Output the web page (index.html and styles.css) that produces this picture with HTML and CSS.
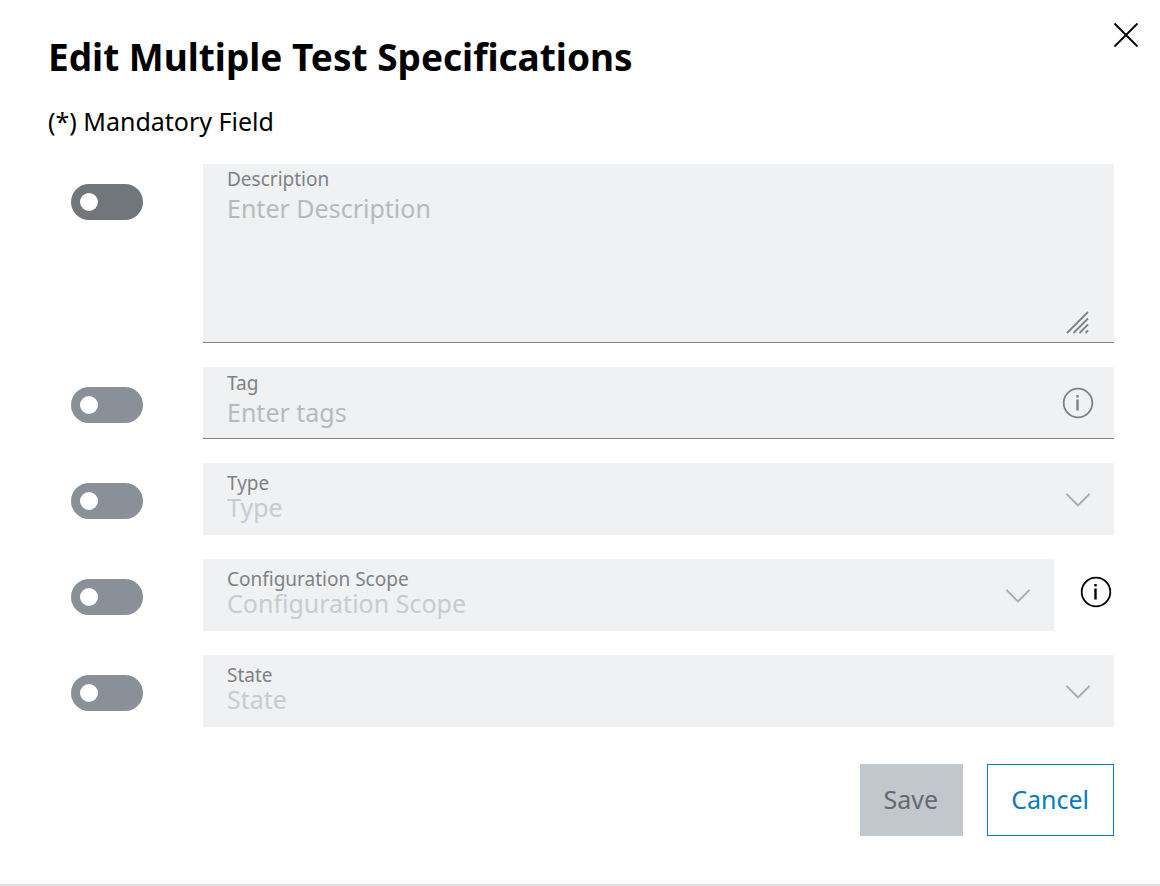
FILE: index.html
```html
<!DOCTYPE html>
<html lang="en">
<head>
    <meta charset="UTF-8">
    <meta name="viewport" content="width=device-width, initial-scale=1.0">
    <title>Edit Multiple Test Specifications</title>
    <link rel="stylesheet" href="styles.css">
</head>
<body>
    <form class="dialog" role="dialog" aria-labelledby="dialog-title">
        <button type="button" class="close-btn" aria-label="Close">
            <svg width="26" height="26" viewBox="0 0 26 26"><path d="M1.5 1.5 24.5 24.5M24.5 1.5 1.5 24.5"/></svg>
        </button>
        <h1 id="dialog-title">Edit Multiple Test Specifications</h1>
        <p class="hint">(*) Mandatory Field</p>

        <div class="row">
            <div class="toggle-cell"><input type="checkbox" class="toggle active" aria-label="Edit description"></div>
            <div class="field textarea-field">
                <div class="field-body">
                    <label for="description">Description</label>
                    <textarea id="description" placeholder="Enter Description" disabled></textarea>
                </div>
                <svg class="resize-icon" width="24" height="24" viewBox="0 0 24 24"><path d="M1 22 22 1M7.500 22 22 7.500M13.500 22 22 13.500M19.500 22 22 19.500"/></svg>
            </div>
        </div>

        <div class="row">
            <div class="toggle-cell"><input type="checkbox" class="toggle" aria-label="Edit tag"></div>
            <div class="field text-field">
                <div class="field-body">
                    <label for="tag">Tag</label>
                    <input type="text" id="tag" placeholder="Enter tags" disabled>
                </div>
                <svg class="info-icon" width="32" height="32" viewBox="0 0 32 32"><circle cx="16" cy="16" r="14.300"/><path class="info-mark" d="M15.500 12.500V23.500M15.500 8V10.500"/></svg>
            </div>
        </div>

        <div class="row">
            <div class="toggle-cell"><input type="checkbox" class="toggle" aria-label="Edit type"></div>
            <div class="field select-field">
                <div class="field-body">
                    <label for="type">Type</label>
                    <select id="type" disabled><option>Type</option></select>
                </div>
                <svg class="chevron" width="24" height="14" viewBox="0 0 24 14"><path d="M.5 1 12 12.500 23.500 1"/></svg>
            </div>
        </div>

        <div class="row">
            <div class="toggle-cell"><input type="checkbox" class="toggle" aria-label="Edit configuration scope"></div>
            <div class="field select-field">
                <div class="field-body">
                    <label for="scope">Configuration Scope</label>
                    <select id="scope" disabled><option>Configuration Scope</option></select>
                </div>
                <svg class="chevron" width="24" height="14" viewBox="0 0 24 14"><path d="M.5 1 12 12.500 23.500 1"/></svg>
            </div>
            <button type="button" class="info-btn" aria-label="About configuration scope">
                <svg class="info-icon" width="32" height="32" viewBox="0 0 32 32"><circle cx="16" cy="16" r="14.300"/><path class="info-mark" d="M15.500 12.500V23.500M15.500 8V10.500"/></svg>
            </button>
        </div>

        <div class="row">
            <div class="toggle-cell"><input type="checkbox" class="toggle" aria-label="Edit state"></div>
            <div class="field select-field">
                <div class="field-body">
                    <label for="state">State</label>
                    <select id="state" disabled><option>State</option></select>
                </div>
                <svg class="chevron" width="24" height="14" viewBox="0 0 24 14"><path d="M.5 1 12 12.500 23.500 1"/></svg>
            </div>
        </div>

        <div class="actions">
            <button type="submit" class="btn btn-save" disabled>Save</button>
            <button type="button" class="btn btn-cancel">Cancel</button>
        </div>
    </form>
</body>
</html>
```

FILE: styles.css
```css
* {
    box-sizing: border-box;
}
body {
    margin: 0;
    background: #e0e0e0; /* Page behind the dialog */
    color: #000000;
    font-family: "Noto Sans", "Open Sans", sans-serif;
    font-size: 25px;
}
.dialog {
    position: relative;
    padding: 31px 46px 48px 48px;
    background: #ffffff;
}
h1 {
    margin: 0;
    font-size: 37px;
    line-height: 52px;
}
.hint {
    margin: 20px 0 25px;
    line-height: 36px;
}
svg {
    display: block;
    flex: none;
    fill: none;
    stroke: currentColor;
    stroke-width: 1.8;
}
button,
input,
textarea,
select {
    font: inherit;
}
.close-btn {
    position: absolute;
    top: 22px;
    right: 21px;
    padding: 0;
    border: none;
    background: none;
    color: #000000;
    cursor: pointer;
}

/* Rows */
.row {
    display: flex;
    margin-bottom: 24px;
}
.toggle-cell {
    flex: none;
    width: 155px;
    padding: 20px 0 0 23px;
}
.toggle {
    display: block;
    width: 72px;
    height: 36px;
    margin: 0;
    padding: 9px;
    appearance: none;
    border-radius: 18px;
    background: #8a9097;
    cursor: pointer;
}
.toggle::before {
    content: "";
    display: block;
    width: 18px;
    height: 18px;
    border-radius: 50%;
    background: #ffffff;
}
.toggle:checked::before {
    margin-left: auto;
}
.toggle.active {
    background: #71767c; /* Hovered toggle */
}

/* Fields */
.field {
    display: flex;
    flex: 1;
    min-width: 0;
    height: 72px;
    padding: 0 24px;
    background: #eff1f2;
    color: #7e8287;
}
.field-body {
    display: flex;
    flex: 1;
    flex-direction: column;
    min-width: 0;
}
.field label {
    margin-top: 4px;
    font-size: 19px;
    line-height: 24px;
}
.field input,
.field textarea,
.field select {
    display: block;
    width: 100%;
    height: 36px;
    margin: -1px 0 0;
    padding: 0;
    border: none;
    outline: none;
    appearance: none;
    background: none;
    line-height: 36px;
}
.field ::placeholder {
    color: #b7babd;
}
.text-field,
.textarea-field {
    border-bottom: 1px solid #7e8287;
}
.textarea-field {
    position: relative;
    height: 179px;
}
.textarea-field label {
    margin-top: 3px;
}
.field textarea {
    flex: 1;
    resize: none;
}
.select-field label {
    margin-top: 8px;
}
.field select {
    margin-top: -6px;
    color: #c8cbcf;
    opacity: 1;
}
.resize-icon {
    position: absolute;
    right: 24px;
    bottom: 7px;
}
.text-field .info-icon {
    margin: 20px -4px 0 0;
}
.info-mark {
    stroke-width: 2.4;
}
.chevron {
    margin-top: 30px;
    color: #a4abb3;
}
.info-btn {
    margin: 17px 2px 0 26px;
    padding: 0;
    align-self: flex-start;
    border: none;
    background: none;
    color: #000000;
    cursor: pointer;
}

/* Footer */
.actions {
    display: flex;
    justify-content: flex-end;
    gap: 24px;
    margin-top: 37px;
}
.btn {
    height: 72px;
    padding: 0 24px 2px 23px;
    border: 1px solid #007bc0;
    background: #ffffff;
    color: #007bc0;
    cursor: pointer;
}
.btn-save {
    border-color: #c1c7cc;
    background: #c1c7cc;
    color: #656a6f;
    cursor: default;
}
```
